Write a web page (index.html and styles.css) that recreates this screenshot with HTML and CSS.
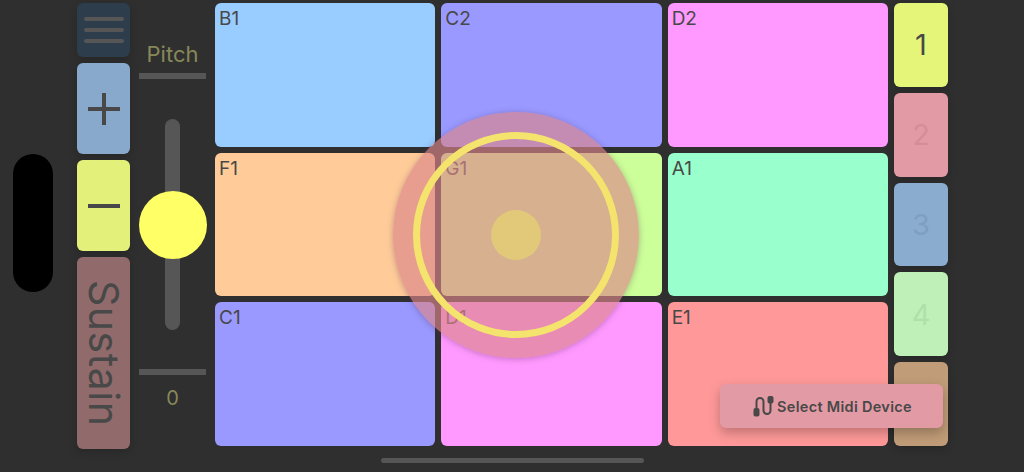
FILE: index.html
```html
<!DOCTYPE html>
<html lang="en">
<head>
<meta charset="utf-8">
<title>Pads</title>
<link rel="stylesheet" href="styles.css">
</head>
<body>
<main class="app">
  <div class="notch-col"><div class="notch"></div></div>
  <div class="side">
    <div class="tile menu"><span></span><span></span><span></span></div>
    <div class="tile plus">
      <svg width="34" height="34" viewBox="0 0 34 34"><path d="M17 1V33M1 17H33" fill="none" stroke="#484848" stroke-width="4"/></svg>
    </div>
    <div class="tile minus">
      <svg width="34" height="4" viewBox="0 0 34 4"><path d="M1 2H33" fill="none" stroke="#484848" stroke-width="4"/></svg>
    </div>
    <div class="tile sustain"><span>Sustain</span></div>
  </div>
  <div class="pitch">
    <div class="pitch-label">Pitch</div>
    <div class="rule"></div>
    <div class="track">
      <div class="rail"></div>
      <div class="thumb"></div>
    </div>
    <div class="rule rule-low"></div>
    <div class="pitch-value">0</div>
  </div>
  <div class="pads">
    <div class="pad c-blue">B1</div>
    <div class="pad c-violet">C2</div>
    <div class="pad c-pink">D2</div>
    <div class="pad c-orange">F1</div>
    <div class="pad c-green">G1</div>
    <div class="pad c-mint">A1</div>
    <div class="pad c-violet">C1</div>
    <div class="pad c-pink">D1</div>
    <div class="pad c-red">E1</div>
  </div>
  <div class="octaves">
    <div class="oct o1">1</div>
    <div class="oct o2">2</div>
    <div class="oct o3">3</div>
    <div class="oct o4">4</div>
    <div class="oct o5">5</div>
  </div>
</main>
<div class="home"></div>
<div class="touch"><div class="ring"></div><div class="dot"></div></div>
<button class="midi" type="button">
  <svg width="21" height="22" viewBox="0 0 21 22"><path d="M3.5 13V6.5a3.5 3.5 0 0 1 7 0V15.5a3.5 3.5 0 0 0 7 0V8" fill="none" stroke="#484848" stroke-width="2"/><rect x="0.5" y="13" width="6" height="8.5" rx="2" fill="#484848"/><rect x="14.5" y="1" width="6" height="7.5" rx="2" fill="#484848"/></svg>
  <span>Select Midi Device</span>
</button>
</body>
</html>
```
FILE: styles.css
```css
* { box-sizing: border-box; }
html, body { margin: 0; height: 472px; overflow: hidden; background: #2f2f2f; }
body { position: relative; font-family: Inter, "Liberation Sans", sans-serif; color: #484848; }
.app { display: flex; height: 449px; padding: 3px 0 0 13px; }
.notch-col { width: 40px; margin-right: 24px; display: flex; align-items: center; padding-bottom: 6px; }
.notch { width: 40px; height: 138px; border-radius: 20px; background: #000; }
.side { width: 53px; display: flex; flex-direction: column; gap: 6px; margin-right: 9px; }
.tile { border-radius: 6px; display: flex; align-items: center; justify-content: center; box-shadow: 0 3px 8px rgba(0,0,0,.18); }
.menu { height: 54px; background: #2d3d4c; flex-direction: column; gap: 7px; }
.menu span { width: 40px; height: 4px; border-radius: 2px; background: #565656; }
.plus { height: 91px; background: #88a8cc; }
.minus { height: 91px; background: #e3f17a; }
.sustain { flex: 1; background: #916b6b; }
.sustain span { writing-mode: vertical-rl; font-size: 41px; letter-spacing: .5px; line-height: 1; color: #484848; }
.pitch { width: 67px; margin-right: 9px; display: flex; flex-direction: column; align-items: center; }
.pitch-label { margin-top: 37px; height: 28px; font-size: 22px; line-height: 28px; color: #87875a; }
.rule { width: 67px; height: 6px; margin-top: 5px; background: #565656; }
.track { position: relative; width: 15px; height: 211px; margin-top: 40px; }
.rail { width: 15px; height: 211px; border-radius: 8px; background: #565656; }
.thumb { position: absolute; left: -26px; top: 72px; width: 68px; height: 68px; border-radius: 50%; background: #ffff66; }
.rule-low { margin-top: 39px; }
.pitch-value { margin-top: 11px; font-size: 20px; line-height: 24px; color: #87875a; }
.pads { width: 673px; height: 443px; display: grid; grid-template-columns: repeat(3, 1fr); grid-template-rows: repeat(3, 1fr); gap: 6px; margin-right: 6px; }
.pad { border-radius: 6px; padding: 4px; font-size: 19px; line-height: 24px; color: #484848; }
.c-blue { background: #99ccff; }
.c-violet { background: #9999ff; }
.c-pink { background: #ff99ff; }
.c-orange { background: #ffcc99; }
.c-green { background: #ccff99; }
.c-mint { background: #99ffcc; }
.c-red { background: #ff9999; }
.octaves { width: 54px; height: 443px; display: flex; flex-direction: column; gap: 6px; }
.oct { flex: 1; border-radius: 6px; display: flex; align-items: center; justify-content: center; font-size: 29px; box-shadow: 0 3px 8px rgba(0,0,0,.18); }
.o1 { background: #e5f57a; color: #484848; }
.o2 { background: #e29aa5; color: #d68d99; }
.o3 { background: #8aacce; color: #7f9fc0; }
.o4 { background: #bff0b8; color: #b0e0aa; }
.o5 { background: #c19c78; color: #c19c78; }
.home { position: absolute; left: 381px; top: 458px; width: 263px; height: 5px; border-radius: 3px; background: #565656; }
.touch { position: absolute; left: 393px; top: 112px; width: 246px; height: 246px; border-radius: 50%; background: rgba(219,134,138,.65); box-shadow: 0 1px 6px rgba(90,40,90,.35); display: flex; align-items: center; justify-content: center; }
.ring { position: absolute; left: 20px; top: 20px; width: 206px; height: 206px; border-radius: 50%; border: 7px solid #f4e36c; }
.dot { width: 50px; height: 50px; border-radius: 50%; background: #e2c97a; }
.midi { position: absolute; left: 720px; top: 384px; width: 223px; height: 44px; padding: 0 0 0 2px; border: 0; border-radius: 6px; background: #e29aa5; color: #484848; box-shadow: 0 5px 12px rgba(0,0,0,.25); display: flex; align-items: center; justify-content: center; gap: 3px; font-family: inherit; font-size: 14.5px; font-weight: 600; letter-spacing: .3px; }
```
